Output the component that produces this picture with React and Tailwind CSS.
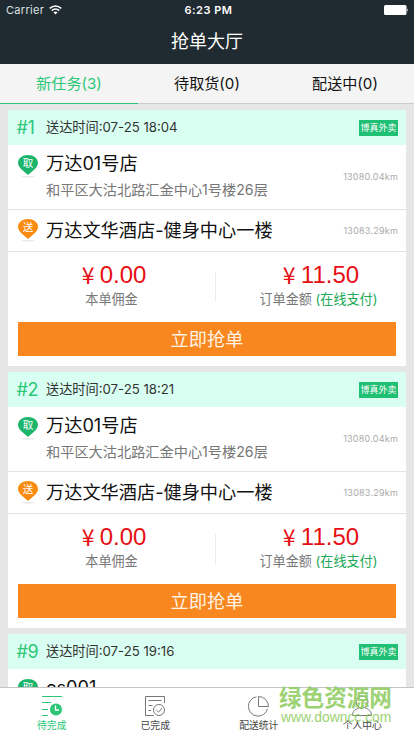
import React from "react";

const latin = "font-[Inter,'Noto_Sans_CJK_SC',sans-serif]";

function Pin({ label, color }) {
  return (
    <svg width="20" height="23" viewBox="0 0 20 23" className="block shrink-0">
      <ellipse cx="10" cy="21.7" rx="7" ry="0.8" fill="#e6e6e6" />
      <path d="M10 20 C8 17.8 0 13 0 8 C0 3 4.5 0 10 0 C15.500 0 20 3 20 8 C20 13 12 17.800 10 20 Z" fill={color} />
      <text x="10" y="12" textAnchor="middle" fontSize="10.500" fill="#fff" fontFamily="Noto Sans CJK SC">
        {label}
      </text>
    </svg>
  );
}

function Amount({ value, children }) {
  return (
    <div className="flex flex-col items-center pt-[9px]">
      <div className="flex h-[27px] items-center pl-[5px] whitespace-nowrap text-[#e60f14]">
        <span className="w-[18px] font-['Noto_Sans_CJK_SC'] text-[23px] leading-[27px]">¥</span>
        <span className="font-['Liberation_Sans'] text-[24px] leading-[27px]">{value}</span>
      </div>
      <div className="mt-[1px] h-[20px] whitespace-nowrap text-[13.1px] leading-[20px] text-[#777]">{children}</div>
    </div>
  );
}

function Card({ no, time, shop = "万达01号店" }) {
  return (
    <section className="h-[256px] shrink-0 bg-white">
      <div className="flex h-[35px] items-center bg-[#d9fff2] pr-[8px] pl-[8.500px]">
        <span className="w-[29.500px] text-[18px] tracking-[-0.5px] text-[#2bc777]">#{no}</span>
        <span className="flex-1 text-[13.2px] text-[#333]">送达时间:{time}</span>
        <span className="h-[16px] w-[39px] bg-[#1fc074] text-center text-[9px] leading-[16px] whitespace-nowrap text-white">博真外卖</span>
      </div>
      <div className="flex h-[65px] border-b border-[#e2e2e2] pr-[8px] pl-[10px]">
        <div className="w-[28px] pt-[10px]">
          <Pin label="取" color="#1db56c" />
        </div>
        <div className="flex-1 whitespace-nowrap">
          <div className="mt-[5px] h-[27px] text-[18.2px] leading-[27px] text-[#111]">{shop}</div>
          <div className="mt-[3px] h-[20px] text-[14.2px] leading-[20px] text-[#777]">和平区大沽北路汇金中心1号楼26层</div>
        </div>
        <span className="pt-[25px] text-[9px] leading-[14px] tracking-[0.22px] text-[#aaa]">13080.04km</span>
      </div>
      <div className="flex h-[42px] border-b border-[#e2e2e2] pr-[8px] pl-[10px]">
        <div className="w-[28px] pt-[9px]">
          <Pin label="送" color="#f98b10" />
        </div>
        <div className="flex-1 text-[18.2px] leading-[41px] whitespace-nowrap text-[#111]">万达文华酒店-健身中心一楼</div>
        <span className="text-[9px] leading-[41px] tracking-[0.22px] text-[#aaa]">13083.29km</span>
      </div>
      <div className="grid h-[70px] grid-cols-[207px_1px_190px]">
        <Amount value="0.00">本单佣金</Amount>
        <div className="mt-[20px] h-[30px] bg-[#ececec]" />
        <div className="pl-[15px]">
          <Amount value="11.50">
            订单金额 <span className="text-[#20a855]">(在线支付)</span>
          </Amount>
        </div>
      </div>
      <button className="mx-[10px] block h-[34px] w-[378px] bg-[#f98720] text-[18.2px] leading-[34px] text-[#fff3e4]">立即抢单</button>
    </section>
  );
}

function NavItem({ label, active, children }) {
  return (
    <div className={`flex flex-1 flex-col items-center pt-[6px] ${active ? "text-[#2bc777]" : "text-[#777]"}`}>
      <svg width="24" height="24" viewBox="0 0 24 24" fill="none" stroke="currentColor" strokeWidth="1">
        {children}
      </svg>
      <span className={`h-[15px] text-[9.800px] leading-[15px] whitespace-nowrap ${active ? "" : "text-[#444]"}`}>{label}</span>
    </div>
  );
}

export default function App() {
  return (
    <div className={`relative flex h-[736px] w-[414px] flex-col overflow-hidden bg-[#e6e6e6] ${latin}`}>
      <header className="h-[64px] shrink-0 bg-[#1f2b30] text-white">
        <div className="grid h-[20px] grid-cols-3 items-center pr-[5px] pl-[6px] text-[11px]">
          <div className="flex items-center gap-[5px] text-[#dfe2e3]">
            <span className="tracking-[0.3px]">Carrier</span>
            <svg width="13" height="10" viewBox="0 0 13 10" fill="none" stroke="#fff" strokeWidth="1.500">
              <path d="M0.700 3.400 Q6.500 -1.500 12.300 3.400 M2.700 5.600 Q6.500 2.400 10.300 5.600" />
              <path d="M6.500 9.500 L4.400 7.300 Q6.500 5.700 8.600 7.300 Z" fill="#fff" stroke="none" />
            </svg>
          </div>
          <span className="pl-[2px] text-center font-semibold tracking-[0.5px]">6:23 PM</span>
          <svg className="justify-self-end" width="25" height="10" viewBox="0 0 25 10">
            <rect width="22.500" height="10" rx="1.500" fill="#fff" />
            <path d="M23.300 3.200 Q25 5 23.300 6.800 Z" fill="#fff" />
          </svg>
        </div>
        <h1 className="text-center text-[18px] leading-[44px] font-normal">抢单大厅</h1>
      </header>
      <nav className="grid h-[40px] shrink-0 grid-cols-3 bg-[#f4f4f4] text-center text-[15.1px] leading-[39px] text-[#111]">
        <div className="border-b border-b-[#2bc777] text-[#2bc777]">新任务(3)</div>
        <div className="border-b border-b-[#ccc]">待取货(0)</div>
        <div className="border-b border-b-[#ccc]">配送中(0)</div>
      </nav>
      <main className="flex min-h-0 flex-1 flex-col gap-[6px] overflow-hidden px-[8px] pt-[6px]">
        <Card no="1" time="07-25 18:04" />
        <Card no="2" time="07-25 18:21" />
        <Card no="9" time="07-25 19:16" shop="cs001" />
      </main>
      <footer className="flex h-[49px] shrink-0 border-t border-[#c4c4c4] bg-white">
        <NavItem label="待完成" active>
          <path d="M2 2.500H22M2 8.500H11M2 15.500H8M2 21.500H8" />
          <circle cx="16" cy="15.500" r="6" fill="currentColor" stroke="none" />
          <path d="M15.500 11.500V16H19" stroke="#fff" strokeWidth="1.300" />
        </NavItem>
        <NavItem label="已完成">
          <path d="M21.500 9V2.500H2.500V21.500H11M5.500 6.500H18.500M5.500 11.500H9.500M5.500 16.500H8" />
          <circle cx="16" cy="16" r="5.500" />
          <path d="M13.300 16L15.500 18.200L19 14" />
        </NavItem>
        <NavItem label="配送统计">
          <path d="M9.500 2.800A9.700 9.700 0 1 0 20.500 14.800M11.500 2.500V12.500H21.500A10 10 0 0 0 11.500 2.500Z" />
        </NavItem>
        <NavItem label="个人中心">
          <circle cx="12" cy="8" r="6" />
          <path d="M9 14C5 15 2.500 17.500 2.500 21.500H21.500C21.500 17.500 19 15 15 14" />
        </NavItem>
      </footer>
      <div className="absolute top-[683px] left-[279px] whitespace-nowrap text-[#8ccb5c] opacity-85">
        <div className="font-['Noto_Sans_CJK_SC'] text-[22.6px] leading-[28px] font-bold">绿色资源网</div>
        <div className="pl-[2px] font-['Liberation_Sans'] text-[13.900px] leading-[13px]">www.downcc.com</div>
      </div>
    </div>
  );
}
